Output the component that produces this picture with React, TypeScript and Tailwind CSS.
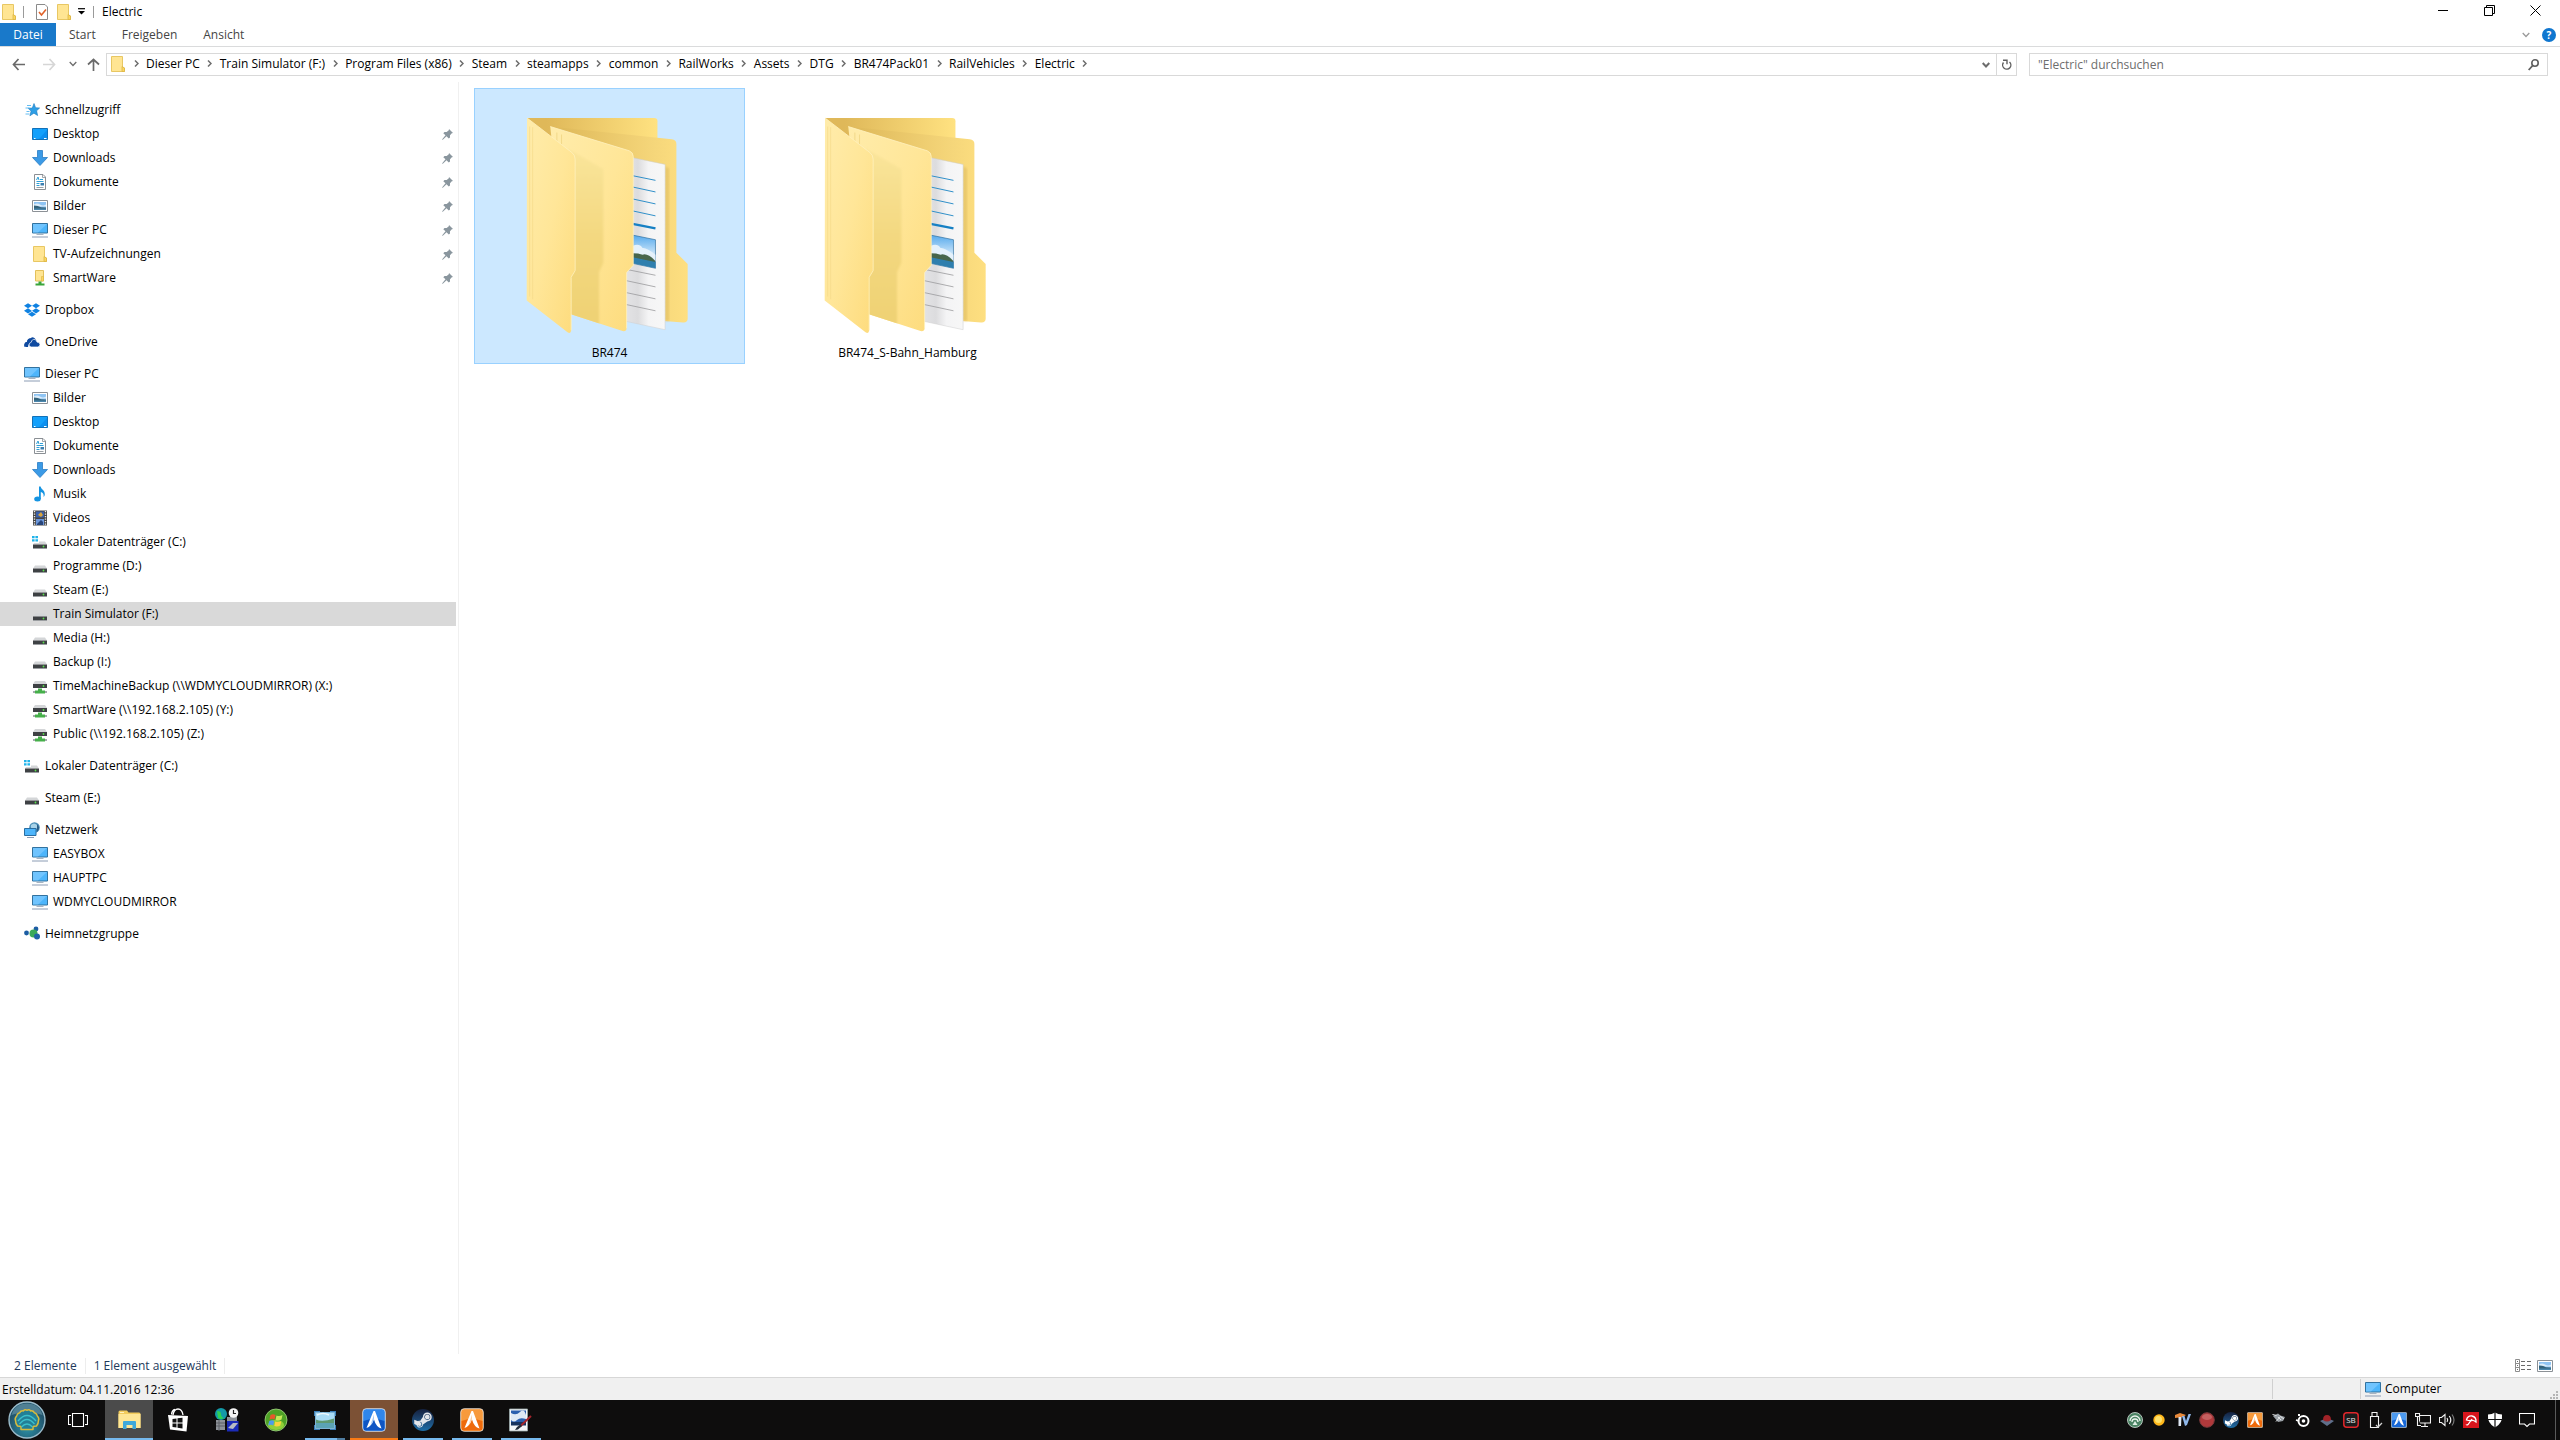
import React, { useState } from 'react';
import { FaDropbox, FaSteamSymbol } from 'react-icons/fa';

/* ---------- small icons (16px) ---------- */

function Svg16({ children }: { children: React.ReactNode }) {
  return (
    <svg className="w-4 h-4 shrink-0" viewBox="0 0 16 16" aria-hidden="true">
      {children}
    </svg>
  );
}

function FolderIcon() {
  return (
    <Svg16>
      <path d="M1.5.5h11V11l2 1v3.5h-13z" fill="#ffe593" stroke="#e8c763" />
      <path d="M12 15.500v-5l2.500 1.500v3.500z" fill="#fbd75f" stroke="#dcb548" strokeWidth=".8" />
    </Svg16>
  );
}

function StarIcon() {
  return (
    <Svg16>
      <path d="M10 1.500l1.600 4.200 4 .3-3 2.800 1 4.700-3.700-2.300-4 2.600 1.200-4.800-3-2.700 4.200-.3z" fill="#2e9fe6" stroke="#1b78be" strokeWidth=".6" />
      <path d="M3 3.500h4M1.500 6h4M2.500 9.500h3M1.500 12h4" stroke="#64bdf2" strokeWidth="1" />
    </Svg16>
  );
}

function DesktopIcon() {
  return (
    <Svg16>
      <path d="M.5 2.500h15v11H.5z" fill="#13a0fb" stroke="#1271b8" />
      <path d="M7 13L15 4v9z" fill="#0b8ff0" />
      <path d="M2 12.500h1.500M12 12.500h2.500" stroke="#fff" />
    </Svg16>
  );
}

function DownloadIcon() {
  return (
    <Svg16>
      <path d="M5.500.5h5V7.500h5L8 15.500.5 7.500h5z" fill="#3b9ae6" stroke="#2a7cc4" strokeWidth=".8" />
    </Svg16>
  );
}

function DocumentIcon() {
  return (
    <Svg16>
      <path d="M2.500.5h8.500l2.500 2.500v12.500h-11z" fill="#fff" stroke="#8a8f94" />
      <path d="M10.500.5v3h3" fill="none" stroke="#8a8f94" strokeWidth=".8" />
      <path d="M4.500 6l1.500-3 1 3M4.500 7.500h7M8 5.500h3M4.500 9.500h3M4.500 11.500h3" fill="none" stroke="#2f9fd6" strokeWidth="1" />
      <path d="M8.500 9h3.500v2.500H8.500z" fill="#3c7fb0" />
      <path d="M4.500 13.500h7" stroke="#9aa0a5" />
    </Svg16>
  );
}

function PictureIcon() {
  return (
    <Svg16>
      <path d="M.5 2.500h15v11H.5z" fill="#fff" stroke="#8c9196" />
      <path d="M2 4h12v8H2z" fill="#8fc4f3" />
      <path d="M2 6.500q3-2 6 0t6 0v2H2z" fill="#dcecf9" />
      <path d="M2 7.500q4 0 7 1.700l5 .3V12H2z" fill="#33627a" />
      <path d="M2 10.500h12V12H2z" fill="#4b87ad" />
    </Svg16>
  );
}

function ComputerIcon() {
  return (
    <Svg16>
      <path d="M.5 1.500h15v9.500H.5z" fill="#4db5fb" stroke="#32729f" />
      <path d="M1 2h14L6 10.500H1z" fill="#7fcbff" opacity=".7" />
      <path d="M4.500 12.500h7" stroke="#a8b4c2" />
      <path d="M0 15h16" stroke="#8b9cb4" />
    </Svg16>
  );
}

function NetFolderIcon() {
  return (
    <Svg16>
      <path d="M3.500.5h8V11h-8z" fill="#ffe593" stroke="#e3c05a" />
      <path d="M9.500 6.500h2V11h-2z" fill="#fbd75f" stroke="#dcb548" strokeWidth=".6" />
      <path d="M6.500 11.500h3v2h3v2h-9v-2h3z" fill="#3aa53a" />
    </Svg16>
  );
}

function OneDriveIcon() {
  return (
    <Svg16>
      <path d="M.5 13Q-.6 9 3 8 3.300 4.500 6.500 4.300 9.500 1.500 12 5.800" fill="#0f4aa0" />
      <path d="M.3 10.500Q.5 8 3 7.800 3.500 4.500 7 4.500L5 8.500 4 13H2Q.2 12.500.3 10.500z" fill="#0f4aa0" />
      <path d="M5 11q0-2.300 2.200-2.700Q8 4.800 11 5.500q1.800.7 2 2.600 3 .2 3 2.600-.2 2.300-2.500 2.300h-6Q5 13 5 11z" fill="#0f4aa0" stroke="#fff" strokeWidth=".7" />
    </Svg16>
  );
}

function MusicIcon() {
  return (
    <Svg16>
      <ellipse cx="5.500" cy="13" rx="3.300" ry="2.500" fill="#1594e2" />
      <path d="M7 .5h1.600c.6 3 4.400 3.500 4.200 8-.1 1-.6 2-1.300 2.500.8-3-1-4.500-2.700-5V13H7z" fill="#1594e2" />
    </Svg16>
  );
}

function VideoIcon() {
  return (
    <Svg16>
      <path d="M1 .5h14v15H1z" fill="#444" />
      <path d="M4 1.500h8v6H4z" fill="#3a5fa8" />
      <path d="M4 9h8v6H4z" fill="#6a95d8" />
      <path d="M6 5l3-3 2 3-2 2z" fill="#d9a53d" />
      <path d="M5 14l4-4 2 2v3H5z" fill="#27457a" />
      <path d="M2.500 1v15M13.500 1v15" stroke="#eee" strokeWidth="1.400" strokeDasharray="1.200 1.300" />
    </Svg16>
  );
}

function DriveIcon() {
  return (
    <Svg16>
      <path d="M3 7.500h10l2 3H1z" fill="#d4d6d8" />
      <path d="M1 10.500h14v4H1z" fill="#3e4144" />
      <path d="M1 14h14v1H1z" fill="#9b9ea1" />
      <circle cx="11.500" cy="12.500" r=".9" fill="#58e04b" />
    </Svg16>
  );
}

function SystemDriveIcon() {
  return (
    <Svg16>
      <path d="M0 2h2.600v2.300H0zM3.400 2H6v2.300H3.400zM0 5.200h2.600v2.300H0zM3.400 5.200H6v2.300H3.400z" fill="#1fb3ea" />
      <path d="M7 7.500h6l2 3H1l1-1.500h5z" fill="#d4d6d8" />
      <path d="M1 10.500h14v4H1z" fill="#3e4144" />
      <path d="M1 14h14v1H1z" fill="#9b9ea1" />
      <circle cx="11.500" cy="12.500" r=".9" fill="#58e04b" />
    </Svg16>
  );
}

function NetDriveIcon() {
  return (
    <Svg16>
      <path d="M3 3h10l2 3H1z" fill="#d4d6d8" />
      <path d="M1 6h14v4H1z" fill="#3e4144" />
      <circle cx="11.500" cy="8" r=".9" fill="#58e04b" />
      <path d="M6 10.500h4v2h3v3H3v-3h3z" fill="#46b04a" />
      <path d="M1 14h2M13 14h2" stroke="#a5a9ad" strokeWidth="2" />
    </Svg16>
  );
}

function NetworkIcon() {
  return (
    <Svg16>
      <circle cx="10.500" cy="5.500" r="5.300" fill="#4b8fb8" />
      <path d="M7 3q3-3 6 0t-2 4-4-4z" fill="#a9d3e8" />
      <path d="M13 2q4 4 0 8z" fill="#2b5d86" />
      <path d="M.5 6.500h11.500v7H.5z" fill="#4db5fb" stroke="#2a6ea2" />
      <path d="M3 15.500h7" stroke="#8b9cb4" />
    </Svg16>
  );
}

function HomegroupIcon() {
  return (
    <Svg16>
      <circle cx="2.500" cy="7" r="2.400" fill="#1c5da3" />
      <circle cx="12" cy="3" r="2.400" fill="#1c5da3" />
      <circle cx="9.500" cy="7.500" r="4" fill="#3aa95a" />
      <circle cx="13" cy="10.500" r="3" fill="#1f62a8" />
    </Svg16>
  );
}

function DropboxIcon() {
  return <FaDropbox className="w-4 h-4 shrink-0 text-[#0f82e2]" />;
}

function PinIcon() {
  return (
    <svg className="w-[11px] h-[11px]" viewBox="0 0 11 11" aria-hidden="true">
      <path d="M7 0l4 4-1.200.3L8 6.300 8 8.500 6.800 9.500 4.500 7.200.8 10.800 0 10.500 3.500 6.300 1.300 4.300 2.500 3 4.700 3 6.800 1.200z" fill="#8a969e" />
    </svg>
  );
}

function ChevronRight() {
  return (
    <svg className="w-[5px] h-[7px]" viewBox="0 0 5 7" aria-hidden="true">
      <path d="M1 .5l3 3-3 3" fill="none" stroke="#6d6d6d" strokeWidth="1.500" />
    </svg>
  );
}

function ChevronDown({ color = '#6d6d6d', bold = false }: { color?: string; bold?: boolean }) {
  return (
    <svg className="w-2 h-[6px]" viewBox="0 0 8 6" aria-hidden="true">
      <path d="M.7 1L4 4.500 7.300 1" fill="none" stroke={color} strokeWidth={bold ? 2 : 1.300} />
    </svg>
  );
}

/* ---------- title bar, ribbon tabs, address row ---------- */

function TitleBar() {
  return (
    <header className="flex justify-between h-[23px]">
      <div className="flex items-center pl-px">
        <FolderIcon />
        <span className="w-px h-3 ml-1.5 mr-2.5 bg-[#9a9a9a]" />
        <button aria-label="Eigenschaften" className="w-4">
          <Svg16>
            <path d="M2.500.5h8.500l2.500 2.500v12.500h-11z" fill="#fff" stroke="#8a8a8a" />
            <path d="M5 8l2.500 3L12 5.500" fill="none" stroke="#e0622a" strokeWidth="1.600" />
          </Svg16>
        </button>
        <button aria-label="Neuer Ordner" className="w-4 ml-1.5">
          <FolderIcon />
        </button>
        <button aria-label="Symbolleiste anpassen" className="w-[7px] ml-1.5">
          <svg className="w-[7px] h-[7px]" viewBox="0 0 7 7">
            <path d="M0 .7h7" stroke="#000" strokeWidth="1.200" />
            <path d="M0 3h7L3.500 6.500z" fill="#000" />
          </svg>
        </button>
        <span className="w-px h-3 mx-2 bg-[#9a9a9a]" />
        <h1>Electric</h1>
      </div>
      <div className="flex h-5 pr-[2px]">
        <button aria-label="Minimieren" className="w-[46px] grid place-items-center">
          <svg className="w-[11px] h-[11px]" viewBox="0 0 11 11"><path d="M0 5.500h10" stroke="#000" /></svg>
        </button>
        <button aria-label="Verkleinern" className="w-[46px] grid place-items-center">
          <svg className="w-[11px] h-[11px]" viewBox="0 0 11 11">
            <path d="M.5 2.500h8v8h-8zM2.500 2V.5h8v8H9" fill="none" stroke="#000" />
          </svg>
        </button>
        <button aria-label="Schließen" className="w-[46px] grid place-items-center">
          <svg className="w-[11px] h-[11px]" viewBox="0 0 11 11"><path d="M.5.5l10 10M10.500.5l-10 10" stroke="#000" /></svg>
        </button>
      </div>
    </header>
  );
}

function RibbonTabs() {
  return (
    <div className="flex justify-between h-6 border-b border-[#dadbdc]">
      <div className="flex">
        <button className="w-14 bg-[#1979ca] text-white">Datei</button>
        {['Start', 'Freigeben', 'Ansicht'].map((tab) => (
          <button key={tab} className="px-[13px] text-[#444]">{tab}</button>
        ))}
      </div>
      <div className="flex items-center gap-3 pr-1">
        <button aria-label="Menüband erweitern"><ChevronDown color="#9a9a9a" /></button>
        <button aria-label="Hilfe" className="w-[14px] h-[14px] rounded-full bg-[#0f76cf] text-white text-[10px] leading-[14px] font-bold">?</button>
      </div>
    </div>
  );
}

const path = [
  'Dieser PC', 'Train Simulator (F:)', 'Program Files (x86)', 'Steam', 'steamapps', 'common',
  'RailWorks', 'Assets', 'DTG', 'BR474Pack01', 'RailVehicles', 'Electric',
];

function AddressRow() {
  const [query, setQuery] = useState('');

  return (
    <div className="flex items-start h-[35px] pt-1.5 pl-3 pr-3">
      <div className="flex items-center h-[22px] w-[94px] shrink-0">
        <button aria-label="Zurück">
          <svg className="w-[13px] h-[13px]" viewBox="0 0 13 13"><path d="M13 6.500H1.500M6.500 1l-5 5.500 5 5.500" fill="none" stroke="#6a6a6a" strokeWidth="1.700" /></svg>
        </button>
        <button aria-label="Vorwärts" className="ml-[18px]">
          <svg className="w-[13px] h-[13px]" viewBox="0 0 13 13"><path d="M0 6.500h11.500M6.500 1l5 5.500-5 5.500" fill="none" stroke="#d6d6d6" strokeWidth="1.700" /></svg>
        </button>
        <button aria-label="Verlauf" className="ml-[13px]"><ChevronDown /></button>
        <button aria-label="Nach oben" className="ml-[10px]">
          <svg className="w-[13px] h-[13px]" viewBox="0 0 13 13"><path d="M6.500 13V1.500M1 6.500l5.500-5 5.500 5" fill="none" stroke="#6a6a6a" strokeWidth="1.700" /></svg>
        </button>
      </div>

      <div className="flex flex-1 items-stretch h-[23px] border border-[#d9d9d9]">
        <div className="flex items-center pl-[3px] pb-0.5">
          <FolderIcon />
          <span className="w-5 grid place-items-center"><ChevronRight /></span>
        </div>
        <ol className="flex flex-1 items-center pb-0.5">
          {path.map((name) => (
            <li key={name} className="flex items-center">
              <a href="#" className="text-black">{name}</a>
              <span className="w-5 grid place-items-center"><ChevronRight /></span>
            </li>
          ))}
        </ol>
        <button aria-label="Vorherige Orte" className="w-5 grid place-items-center"><ChevronDown bold /></button>
        <button aria-label="Aktualisieren" className="w-5 grid place-items-center border-l border-[#d9d9d9]">
          <svg className="w-[10px] h-[12px]" viewBox="0 0 10 12">
            <path d="M1.500 3.500A4.100 4.100 0 1 0 7.500 3M1 1.200h4v4" fill="none" stroke="#5f5f5f" strokeWidth="1.400" />
          </svg>
        </button>
      </div>

      <div className="flex items-center w-[519px] h-[23px] ml-3 pl-2 pr-2 border border-[#d9d9d9]">
        <input
          aria-label="Suchen"
          value={query}
          onChange={(e) => setQuery(e.target.value)}
          placeholder={'"Electric" durchsuchen'}
          className="flex-1 outline-none placeholder:text-[#6d6d6d]"
        />
        <svg className="w-[11px] h-[12px]" viewBox="0 0 11 12">
          <circle cx="7" cy="4" r="3.200" fill="none" stroke="#5f5f5f" strokeWidth="1.600" />
          <path d="M4.700 6.500L.7 11" stroke="#5f5f5f" strokeWidth="1.800" />
        </svg>
      </div>
    </div>
  );
}

/* ---------- navigation tree ---------- */

type Node = { name: string; icon: () => React.ReactElement; pinned?: boolean; active?: boolean };
type Group = Node & { items?: Node[] };

const tree: Group[] = [
  {
    name: 'Schnellzugriff',
    icon: StarIcon,
    items: [
      { name: 'Desktop', icon: DesktopIcon, pinned: true },
      { name: 'Downloads', icon: DownloadIcon, pinned: true },
      { name: 'Dokumente', icon: DocumentIcon, pinned: true },
      { name: 'Bilder', icon: PictureIcon, pinned: true },
      { name: 'Dieser PC', icon: ComputerIcon, pinned: true },
      { name: 'TV-Aufzeichnungen', icon: FolderIcon, pinned: true },
      { name: 'SmartWare', icon: NetFolderIcon, pinned: true },
    ],
  },
  { name: 'Dropbox', icon: DropboxIcon },
  { name: 'OneDrive', icon: OneDriveIcon },
  {
    name: 'Dieser PC',
    icon: ComputerIcon,
    items: [
      { name: 'Bilder', icon: PictureIcon },
      { name: 'Desktop', icon: DesktopIcon },
      { name: 'Dokumente', icon: DocumentIcon },
      { name: 'Downloads', icon: DownloadIcon },
      { name: 'Musik', icon: MusicIcon },
      { name: 'Videos', icon: VideoIcon },
      { name: 'Lokaler Datenträger (C:)', icon: SystemDriveIcon },
      { name: 'Programme (D:)', icon: DriveIcon },
      { name: 'Steam (E:)', icon: DriveIcon },
      { name: 'Train Simulator (F:)', icon: DriveIcon, active: true },
      { name: 'Media (H:)', icon: DriveIcon },
      { name: 'Backup (I:)', icon: DriveIcon },
      { name: 'TimeMachineBackup (\\\\WDMYCLOUDMIRROR) (X:)', icon: NetDriveIcon },
      { name: 'SmartWare (\\\\192.168.2.105) (Y:)', icon: NetDriveIcon },
      { name: 'Public (\\\\192.168.2.105) (Z:)', icon: NetDriveIcon },
    ],
  },
  { name: 'Lokaler Datenträger (C:)', icon: SystemDriveIcon },
  { name: 'Steam (E:)', icon: DriveIcon },
  {
    name: 'Netzwerk',
    icon: NetworkIcon,
    items: [
      { name: 'EASYBOX', icon: ComputerIcon },
      { name: 'HAUPTPC', icon: ComputerIcon },
      { name: 'WDMYCLOUDMIRROR', icon: ComputerIcon },
    ],
  },
  { name: 'Heimnetzgruppe', icon: HomegroupIcon },
];

function TreeRow({ node, child }: { node: Node; child?: boolean }) {
  const Icon = node.icon;
  return (
    <a
      href="#"
      className={`flex items-center h-6 mr-[2px] gap-[5px] pr-[3px] ${child ? 'pl-8' : 'pl-6'} ${node.active ? 'bg-[#d9d9d9]' : ''}`}
    >
      <Icon />
      <span className="flex-1 whitespace-nowrap">{node.name}</span>
      {node.pinned && <PinIcon />}
    </a>
  );
}

function Sidebar() {
  return (
    <nav className="w-[459px] shrink-0 pt-4 border-r border-[#f0f0f0]">
      <ul className="flex flex-col gap-2">
        {tree.map((group) => (
          <li key={group.name}>
            <TreeRow node={group} />
            {group.items && (
              <ul>
                {group.items.map((item) => (
                  <li key={item.name}><TreeRow node={item} child /></li>
                ))}
              </ul>
            )}
          </li>
        ))}
      </ul>
    </nav>
  );
}

/* ---------- folder tiles ---------- */

function FolderArt() {
  return (
    <svg className="w-[180px] h-60" viewBox="0 0 540 720" aria-hidden="true">
      <defs>
        <linearGradient id="back" x1="0" x2="1">
          <stop offset=".15" stopColor="#dfb859" />
          <stop offset="1" stopColor="#ffe281" />
        </linearGradient>
        <linearGradient id="backInner" x1="0" x2="1">
          <stop offset=".1" stopColor="#e0bb5c" />
          <stop offset=".75" stopColor="#f5d67a" />
          <stop offset="1" stopColor="#fedf80" />
        </linearGradient>
        <linearGradient id="front" x1="0" y1="0" x2="1" y2="1">
          <stop offset="0" stopColor="#ffecab" />
          <stop offset=".5" stopColor="#ffe698" />
          <stop offset="1" stopColor="#fddb7c" />
        </linearGradient>
        <linearGradient id="shade" x1="0" x2="0" y1="0" y2="1">
          <stop offset="0" stopColor="#fae59b" />
          <stop offset=".5" stopColor="#f3d880" />
          <stop offset="1" stopColor="#efd173" />
        </linearGradient>
        <linearGradient id="page" x1="0" x2="1">
          <stop offset=".1" stopColor="#e2e2e4" />
          <stop offset=".35" stopColor="#dcdcde" />
          <stop offset=".6" stopColor="#f4f4f5" />
          <stop offset="1" stopColor="#f7f7f7" />
        </linearGradient>
        <linearGradient id="sky" x1="0" x2="0" y1="0" y2="1">
          <stop offset="0" stopColor="#55a9ec" />
          <stop offset=".6" stopColor="#d3e9fa" />
        </linearGradient>
        <filter id="soft"><feGaussianBlur stdDeviation="4" /></filter>
        <clipPath id="innerClip">
          <path d="M90 80L328 153Q340 158 340 170V498L320 520V688Q319 698 308 696L150 645Z" />
        </clipPath>
      </defs>
      <path d="M20 54H403Q413 54 413 64V200H165Z" fill="url(#back)" />
      <path d="M90 80L456 118Q470 120 470 132V460L504 494V660Q503 671 490 670L300 655V200Z" fill="url(#backInner)" />
      <path d="M436 200L448 206V666H436z" fill="#d9b55c" opacity=".5" filter="url(#soft)" />
      <path d="M320 170L436 194V692L310 665Z" fill="url(#page)" stroke="#cfcfcf" strokeWidth="1.500" />
      <path d="M338 228l69 14M338 262l69 15M338 298l69 15M338 334l69 15" stroke="#2f8fc9" strokeWidth="3" />
      <path d="M338 373l69 14" stroke="#1680c4" strokeWidth="7" />
      <path d="M338 407L407 421V507L338 492Z" fill="url(#sky)" stroke="#2f6f9e" strokeWidth="2" />
      <path d="M338 440q20-10 30 6 12-2 39 20v20l-69-20z" fill="#e4f1fb" />
      <path d="M338 462q18 0 30 4 14-6 38 18v6l-68-14z" fill="#47664c" />
      <path d="M338 474l69 14v19l-69-15z" fill="#2f7fae" />
      <path d="M318 510l89 18M318 544l89 19M318 580l89 19M318 616l89 19" stroke="#9d9d9f" strokeWidth="2.500" />
      <path d="M90 80L328 153Q340 158 340 170V498L320 520V688Q319 698 308 696L150 645Z" fill="url(#front)" />
      <g clipPath="url(#innerClip)">
        <path d="M140 145L250 208V490L237 520V690H130Z" fill="url(#shade)" filter="url(#soft)" />
        <path d="M110 98V130M124 104V140" stroke="#ecd07a" strokeWidth="2" />
      </g>
      <path d="M90 80L328 153Q340 158 340 170V498L320 520V688" fill="none" stroke="#fff0bd" strokeWidth="2.500" />
      <path d="M20 54L155 158Q165 166 165 178V514L153 534V694Q152 706 142 700L19 604Z" fill="url(#front)" />
      <path d="M20 54L155 158Q165 166 165 178V514L153 534V694" fill="none" stroke="#fff0bd" strokeWidth="2.500" />
      <path d="M28 80V592M37 82V600" stroke="#f3d988" strokeWidth="2" />
    </svg>
  );
}

function FolderTile({ name, selected, onSelect }: { name: string; selected: boolean; onSelect: () => void }) {
  return (
    <button
      onClick={onSelect}
      className={`flex flex-col items-center w-[271px] h-[276px] pt-[11px] border ${
        selected ? 'bg-[#cce8ff] border-[#99d1ff]' : 'border-transparent'
      }`}
    >
      <FolderArt />
      <span className="pt-1 whitespace-nowrap leading-5">{name}</span>
    </button>
  );
}

function FileArea() {
  const [selected, setSelected] = useState('BR474');
  return (
    <main className="flex flex-1 flex-wrap content-start gap-[27px] pt-1.5 pl-[15px]">
      {['BR474', 'BR474_S-Bahn_Hamburg'].map((name) => (
        <FolderTile key={name} name={name} selected={selected === name} onSelect={() => setSelected(name)} />
      ))}
    </main>
  );
}

/* ---------- status bars ---------- */

function StatusBar() {
  return (
    <div className="flex items-center justify-between h-[23px] pl-[14px] pr-[7px] text-[#1e395b]">
      <div className="flex items-center">
        <span className="pr-2 border-r border-[#ededed]">2 Elemente</span>
        <span className="px-2 border-r border-[#ededed]">1 Element ausgewählt</span>
      </div>
      <div className="flex items-center gap-1.5">
        <button aria-label="Details">
          <svg className="w-4 h-[13px]" viewBox="0 0 16 13">
            <path d="M.5.5h4v12h-4zM.5 4.500h4M.5 8.500h4" fill="none" stroke="#8d8d8d" />
            <path d="M6 2.500h4M12 2.500h4M6 6.500h4M12 6.500h4M6 10.500h4M12 10.500h4" stroke="#6a6a6a" />
            <path d="M2 2.500h1M2 6.500h1M2 10.500h1" stroke="#6a6a6a" />
          </svg>
        </button>
        <button aria-label="Große Symbole"><PictureIcon /></button>
      </div>
    </div>
  );
}

function InfoBar() {
  return (
    <div className="flex h-[23px] border-t border-[#d7d7d7] bg-[#f0f0f0]">
      <span className="flex-1 pl-[2px] leading-[24px]">Erstelldatum: 04.11.2016 12:36</span>
      <span className="w-[88px] my-px border-l border-[#d0d0d0]" />
      <div className="flex items-center w-[200px] my-px pl-1 gap-1 border-l border-[#d0d0d0]">
        <ComputerIcon />
        <span className="flex-1">Computer</span>
        <svg className="w-2 h-2 mr-[2px] self-end" viewBox="0 0 8 8">
          <path d="M6 0h2v2H6zM3 3h2v2H3zM6 3h2v2H6zM0 6h2v2H0zM3 6h2v2H3zM6 6h2v2H6z" fill="#b5b5b5" />
        </svg>
      </div>
    </div>
  );
}

/* ---------- taskbar ---------- */

function Svg24({ children }: { children: React.ReactNode }) {
  return <svg className="w-6 h-6" viewBox="0 0 24 24" aria-hidden="true">{children}</svg>;
}

function AviraIcon({ from, to, small }: { from: string; to: string; small?: boolean }) {
  return (
    <svg className={small ? 'w-4 h-4' : 'w-6 h-6'} viewBox="0 0 24 24" aria-hidden="true">
      <rect x=".7" y=".7" width="22.600" height="22.600" rx={small ? 1 : 3.500} fill={from} stroke="#fff" strokeOpacity=".7" strokeWidth="1" />
      <path d="M1.500 13Q12 9 22.500 13V20q0 2.500-2.500 2.500H4Q1.500 22.500 1.500 20z" fill={to} />
      <path d="M11.500 3L4.500 20Q9.500 18.500 12 11.500 14 19 19.500 20.500L13 3z" fill="#fff" />
      <path d="M12 6.500L8.500 17Q11 14.500 12 11z" fill={from} opacity=".45" />
    </svg>
  );
}

function SteamIcon({ small }: { small?: boolean }) {
  return (
    <span className={`grid place-items-center rounded-full bg-linear-to-b from-[#14213f] to-[#1d6fa8] ${small ? 'w-4 h-4' : 'w-[22px] h-[22px]'}`}>
      <FaSteamSymbol className={small ? 'w-[15px] h-[15px] text-white' : 'w-5 h-5 text-[#e3e6ea]'} />
    </span>
  );
}

function ShellOrb() {
  return (
    <svg className="w-[38px] h-[38px]" viewBox="0 0 38 38" aria-hidden="true">
      <defs>
        <radialGradient id="orb" cy=".7">
          <stop offset="0" stopColor="#2c93a8" />
          <stop offset="1" stopColor="#22566e" />
        </radialGradient>
      </defs>
      <circle cx="19" cy="19" r="18" fill="url(#orb)" stroke="#9bbccb" strokeWidth="1.400" />
      <path d="M3.500 14Q7 2.500 19 2.500T34.500 14Q19 8 3.500 14z" fill="#8ab3c4" opacity=".45" />
      <path d="M13 28.500v-3l-3.500-.5q-2-2.500-2-5.500-1-2.500 1.200-4.500.3-2.500 2.800-3.200 1.200-2.200 3.800-1.900 1.500-1.700 3.700-.7 2.200-1 3.700.7 2.600-.3 3.800 1.900 2.500.7 2.800 3.200 2.200 2 1.200 4.500 0 3-2 5.500l-3.500.5v3z" fill="#237f96" stroke="#d9bb3c" strokeWidth="1.500" strokeLinejoin="round" />
      <path d="M10 20q9-11 18 0M11.500 23q7.500-9 15 0M13.500 26q5.500-6 11 0" fill="none" stroke="#3cc0cb" strokeWidth="1.300" />
    </svg>
  );
}

function ExplorerIcon() {
  return (
    <svg className="w-[23px] h-5" viewBox="0 0 23 20" aria-hidden="true">
      <path d="M.5 2Q.5.5 2 .5h7l1.500 2H21q1.500 0 1.500 1.500v14H.5z" fill="#f3cc5c" />
      <path d="M.5 4h22v14H.5z" fill="#ffe796" />
      <path d="M5 12q0-1 1-1h11q1 0 1 1v7h-3.500v-4h-6v4H5z" fill="#3fa9db" />
      <path d="M2 2.500h4" stroke="#fff2c0" />
    </svg>
  );
}

function StoreIcon() {
  return (
    <Svg24>
      <path d="M2 7l20 1-1.500 15.500L4 21.500z" fill="#fff" />
      <path d="M7 7Q8 1 12 1t5 6M5.500 6.500Q6 2 9 1.500" fill="none" stroke="#fff" strokeWidth="1.300" />
      <path d="M6.500 11l4-.5v4h-4zM11.500 10.300l5-.5v4.700h-5zM6.500 15.500h4v4l-4-.5zM11.500 15.500h5v5l-5-.8z" fill="#111" />
    </Svg24>
  );
}

function ServersIcon() {
  return (
    <Svg24>
      <circle cx="6" cy="6" r="6" fill="#149aa8" />
      <path d="M2 3q4 0 4 3t3 4q-3 2-6 0z" fill="#2fd052" />
      <path d="M12 9h10v5H12zM1 12h9v10H1z" fill="#8e9298" />
      <path d="M12 13h11.500v10.500H12z" fill="#1b2bb8" />
      <path d="M13 20l5-5h5l-5 6z" fill="#b8bcc4" />
      <path d="M1 15h9M1 18h9M4 12v11" stroke="#5c6066" />
      <circle cx="18.500" cy="5" r="4.800" fill="#f4f4f4" />
      <path d="M18.500 2v3.500H21" fill="none" stroke="#222" strokeWidth="1.200" />
    </Svg24>
  );
}

function GreenOrbIcon() {
  return (
    <Svg24>
      <circle cx="12" cy="12" r="11" fill="#4ea226" stroke="#a5d884" strokeWidth=".8" />
      <ellipse cx="12" cy="17" rx="8" ry="5" fill="#a4dc3c" opacity=".8" />
      <path d="M6.500 7q2.500-1.500 5 0l-1 4.500q-2-1.500-5 0z" fill="#e8592c" />
      <path d="M12.500 7.500q3 1.300 6-.5l-1 4.500q-3 1.500-6 .5z" fill="#c4ea58" />
      <path d="M5.200 13q2.500-1.500 5 0l-1 4.500q-2-1.500-5 0z" fill="#4f9be8" />
      <path d="M11.300 13.500q3 1.300 6-.5l-1 4.500q-3 1.500-6 .5z" fill="#fcd13a" />
    </Svg24>
  );
}

function PhotoIcon() {
  return (
    <svg className="w-[22px] h-[19px]" viewBox="0 0 22 19" aria-hidden="true">
      <path d="M0 0h6v5H0zM16 0h6v5h-6zM0 14h6v5H0zM16 14h6v5h-6z" fill="#3b7fb8" />
      <path d="M1.500 1.500h19v16h-19z" fill="#a9dcf6" stroke="#7fb4d6" />
      <path d="M2 8.500q6 3 18-1v5H2z" fill="#5f9a72" />
      <path d="M2 12h18v5H2z" fill="#5ba3b5" />
      <path d="M3 4q6-3 12 0" fill="none" stroke="#eef8fd" strokeWidth="1.500" />
    </svg>
  );
}

function PaintIcon() {
  return (
    <Svg24>
      <path d="M.5 1h18v22H.5z" fill="#f5f7fa" stroke="#9aa" strokeWidth=".8" />
      <path d="M2 2.500h15v14H2z" fill="#2b5fae" />
      <path d="M2 5q5 3 9-1t6 3v4q-6-2-9 1t-6 0z" fill="#dfe9f5" />
      <path d="M2 14h15v3.500H2z" fill="#17335f" />
      <path d="M22 8L11 18.500" stroke="#a4252c" strokeWidth="2" />
      <path d="M11.500 16.500l1.500 1.500-4 3.500-3 .5 2-3z" fill="#222c3a" />
    </Svg24>
  );
}

const apps = [
  { label: 'Explorer', icon: <ExplorerIcon />, tile: 'bg-[#4b4b4b]', bar: 'w-12 bg-[#76b9ed]' },
  { label: 'Store', icon: <StoreIcon /> },
  { label: 'Server', icon: <ServersIcon /> },
  { label: 'Media Center', icon: <GreenOrbIcon /> },
  { label: 'Fotos', icon: <PhotoIcon />, bar: 'w-10 bg-[#76b9ed] border-r-8 border-[#4f7ca0]' },
  { label: 'Avira', icon: <AviraIcon from="#2f86ea" to="#0f55c4" />, tile: 'bg-[#7c5135]', bar: 'w-12 bg-[#f97a14]' },
  { label: 'Steam', icon: <SteamIcon />, bar: 'w-10 bg-[#76b9ed]' },
  { label: 'Avira System', icon: <AviraIcon from="#f79a3c" to="#ee6a0c" />, bar: 'w-10 bg-[#76b9ed]' },
  { label: 'Paint', icon: <PaintIcon />, bar: 'w-10 bg-[#76b9ed]' },
];

const tray = [
  {
    label: 'Netzmonitor',
    icon: (
      <Svg16>
        <circle cx="8" cy="8" r="7.500" fill="#4b8464" stroke="#c3cfc8" strokeWidth=".9" />
        <path d="M3 9a5 5 0 0 1 10 0M5 10a3 3 0 0 1 6 0" fill="none" stroke="#eef6f0" strokeWidth="1.300" />
        <path d="M5.500 13L8 9l2.500 4z" fill="#dfeee4" />
      </Svg16>
    ),
  },
  { label: 'Wetter', icon: <Svg16><circle cx="8" cy="8" r="5.700" fill="#ffb81c" /><circle cx="7.500" cy="7.500" r="3.500" fill="#ffe26a" /></Svg16> },
  {
    label: 'TV',
    icon: (
      <Svg16>
        <path d="M0 3l5-2 6 2-3 2-8 1z" fill="#e8893a" />
        <path d="M3.500 5h3L6 14H3.500z" fill="#dfe8f4" />
        <path d="M7 4l3 10 2-1 4-11h-2.500L11 9 9.500 4z" fill="#8fb7ea" />
      </Svg16>
    ),
  },
  { label: 'Aufnahme', icon: <Svg16><circle cx="8" cy="8" r="7.300" fill="#b0393b" stroke="#7d3a3c" /><ellipse cx="8" cy="5" rx="5" ry="3" fill="#cf7071" opacity=".7" /></Svg16> },
  { label: 'Steam', icon: <SteamIcon small /> },
  { label: 'Avira System', icon: <AviraIcon from="#f79a3c" to="#ee6a0c" small /> },
  {
    label: 'Controller',
    icon: (
      <Svg16>
        <path d="M2 4l5-2.500 2.500 2L14 5l-2 4-5 1z" fill="#9aa0a6" />
        <path d="M1.500 2.500l4 1M5 9.500L9.500 4.500 13 7M7 5l3 3" fill="none" stroke="#e4e6e8" strokeWidth="1" />
      </Svg16>
    ),
  },
  {
    label: 'SteelSeries',
    icon: (
      <Svg16>
        <circle cx="8.500" cy="9" r="5" fill="none" stroke="#fff" strokeWidth="2" />
        <circle cx="8.500" cy="9" r="1.800" fill="#fff" />
        <path d="M1 8l3 1M3 3h2" stroke="#fff" strokeWidth="1.800" />
      </Svg16>
    ),
  },
  {
    label: 'Grafik',
    icon: (
      <Svg16>
        <path d="M1 9l7-3 7 3-7 5z" fill="#5f6f8a" />
        <path d="M4 8q0-5 4-5t4 5q-4 3-8 0z" fill="#a02328" />
      </Svg16>
    ),
  },
  {
    label: 'Sound Blaster',
    icon: (
      <Svg16>
        <rect x=".8" y=".8" width="14.400" height="14.400" rx="3" fill="#1c1c1c" stroke="#e0272b" strokeWidth="1.500" />
        <text x="8" y="11" textAnchor="middle" fontSize="8" fill="#e8e8e8">SB</text>
      </Svg16>
    ),
  },
  {
    label: 'Hardware sicher entfernen',
    icon: (
      <Svg16>
        <path d="M5 .5h5v4H5zM3.500 4.500h8v11h-8z" fill="none" stroke="#f2f2f2" strokeWidth="1.100" />
        <path d="M9 13l2 2 4-4" fill="none" stroke="#cfcfcf" strokeWidth="1.300" />
      </Svg16>
    ),
  },
  { label: 'Avira', icon: <AviraIcon from="#4c9af0" to="#1767d6" small /> },
  {
    label: 'Netzwerk',
    icon: (
      <Svg16>
        <path d="M4.500 3.500h11v7.500h-11zM10 11v3M6 14.500h7" fill="none" stroke="#f2f2f2" strokeWidth="1.100" />
        <path d="M.5 1.500h4v3h-4zM2.500 5v8.500H6" fill="#111" stroke="#f2f2f2" strokeWidth="1.100" />
      </Svg16>
    ),
  },
  {
    label: 'Lautstärke',
    icon: (
      <Svg16>
        <path d="M.5 5.500h2l3.500-3v11l-3.500-3h-2z" fill="none" stroke="#f2f2f2" strokeWidth="1.100" />
        <path d="M8 6q1.500 2 0 4M10.300 4q3 4 0 8" fill="none" stroke="#f2f2f2" strokeWidth="1.200" />
        <path d="M13 2.500q4 5.500 0 11" fill="none" stroke="#777" strokeWidth="1.200" />
      </Svg16>
    ),
  },
  {
    label: 'Antivir',
    icon: (
      <Svg16>
        <path d="M0 0h16v16H0z" fill="#d8151c" />
        <path d="M3.500 8Q4.500 3.500 9 4q4.500 1 4 6-2.500-2-4.500-1.500T3.500 8z" fill="none" stroke="#fff" strokeWidth="1.300" />
        <path d="M9 7l-4 5.500q-1.200 1-2 0" fill="none" stroke="#fff" strokeWidth="1.200" />
      </Svg16>
    ),
  },
  {
    label: 'Defender',
    icon: (
      <Svg16>
        <path d="M8 .5q3 2 7 2Q16 11 8 15.500 0 11 1 2.500q4 0 7-2z" fill="#fff" />
        <path d="M8 0v16M0 7.500h16" stroke="#111" strokeWidth="1.200" />
      </Svg16>
    ),
  },
];

function Taskbar() {
  return (
    <footer className="flex justify-between h-10 bg-[#0e0d0d]">
      <div className="flex gap-px">
        <button aria-label="Start" className="w-[52px] pl-0.5 grid place-items-center"><ShellOrb /></button>
        <button aria-label="Taskansicht" className="w-[51px] pr-px grid place-items-center">
          <svg className="w-5 h-4" viewBox="0 0 20 16">
            <path d="M4.500 1.500h11v13h-11zM3 3.500H.5v9H3M17 3.500h2.500v9H17" fill="none" stroke="#fff" strokeWidth="1.100" />
          </svg>
        </button>
        {apps.map((app) => (
          <button key={app.label} aria-label={app.label} className={`flex flex-col items-center w-12 ${app.tile ?? ''}`}>
            <span className="grid place-items-center h-[38px] pt-0.5">{app.icon}</span>
            <span className={`h-0.5 ${app.bar ?? ''}`} />
          </button>
        ))}
      </div>
      <div className="flex">
        <div className="flex items-center">
          {tray.map((item) => (
            <button key={item.label} aria-label={item.label} className="w-6 grid place-items-center">{item.icon}</button>
          ))}
        </div>
        <button aria-label="Info-Center" className="w-[49px] pr-2 grid place-items-center border-r border-[#5a5a5a]">
          <svg className="w-4 h-4" viewBox="0 0 16 16">
            <path d="M.5 1.500h15v10.500H10.500L8 14.500 5.500 12H.5z" fill="none" stroke="#fff" strokeWidth="1.100" />
          </svg>
        </button>
        <button aria-label="Desktop anzeigen" className="w-1" />
      </div>
    </footer>
  );
}

export default function App() {
  return (
    <div className="flex flex-col min-h-screen bg-white text-black text-[12px] leading-4 font-['Open_Sans','Noto_Sans',sans-serif]">
      <TitleBar />
      <RibbonTabs />
      <AddressRow />
      <div className="flex flex-1">
        <Sidebar />
        <FileArea />
      </div>
      <StatusBar />
      <InfoBar />
      <Taskbar />
    </div>
  );
}
